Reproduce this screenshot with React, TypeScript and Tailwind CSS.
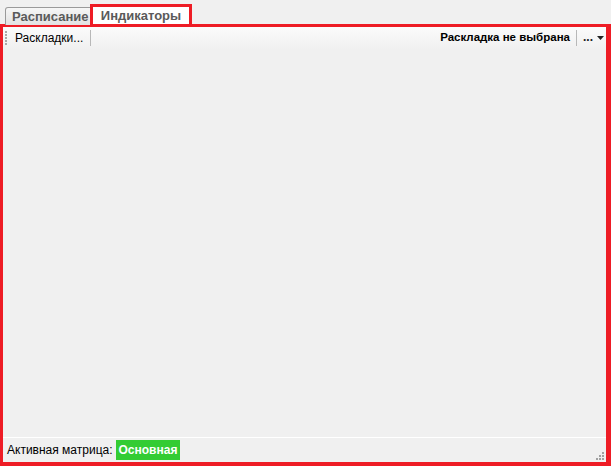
import React from "react";

export default function App() {
  return (
    <div className="w-[611px] h-[466px] bg-[#f0f0f0] flex flex-col font-['Liberation_Sans',Arial,sans-serif] overflow-hidden">
      {/* tabs */}
      <div className="h-[24px] flex items-end pl-[5px] relative z-10">
        <div className="h-[18px] w-[87px] border border-[#9a9a9a] border-b-0 rounded-tl-[3px] bg-gradient-to-b from-[#f6f6f6] to-[#e2e2e2] flex items-center pl-[6px] text-[13px] font-bold text-[#5a5a5a] leading-none mb-[-1px]">
          Расписание
        </div>
        <div className="h-[23px] w-[102px] -ml-[2px] border-[3px] border-[#ee1c25] bg-white flex items-center justify-center text-[13px] font-bold text-[#5a5a5a] leading-none mb-[-3px]">
          Индикаторы
        </div>
      </div>
      {/* panel */}
      <div className="flex-1 flex flex-col border-t-[3px] border-l-[3px] border-r-[5px] border-b-[4px] border-[#ee1c25] bg-[#f0f0f0]">
        {/* toolbar */}
        <div className="h-[22px] flex items-center bg-gradient-to-b from-[#fbfbfb] to-[#f0f0f0] text-[12px] text-black">
          <div className="ml-[2px] w-[2px] h-[16px] flex flex-col justify-between py-[1px]">
            {[0, 1, 2, 3, 4].map((i) => (
              <div key={i} className="w-[2px] h-[2px] bg-[#a8a8a8]" />
            ))}
          </div>
          <span className="ml-[8px]">Раскладки...</span>
          <div className="ml-[7px] w-px h-[16px] bg-[#b8b8b8]" />
          <div className="flex-1" />
          <span className="font-bold text-[11.5px]">Раскладка не выбрана</span>
          <div className="ml-[6px] w-px h-[16px] bg-[#b8b8b8]" />
          <span className="ml-[6px] font-bold text-[#202020] leading-none -mt-[2px]">...</span>
          <svg width="7" height="4" viewBox="0 0 7 4" className="ml-[4px] mr-[2px]">
            <polygon points="0,0 7,0 3.5,4" fill="#222" />
          </svg>
        </div>
        <div className="flex-1" />
        {/* status bar */}
        <div className="h-[25px] border-t border-white flex items-center text-[12px] text-black relative">
          <span className="ml-[4px]">Активная матрица:</span>
          <span className="ml-[3px] h-[20px] px-[3px] bg-[#33cc33] text-white font-bold flex items-center text-[12px]">Основная</span>
          <div className="flex-1" />
          <svg width="10" height="10" viewBox="0 0 10 10" className="mr-[1px] self-end mb-[1px]">
            <rect x="7" y="1" width="2" height="2" fill="#a0a0a0" />
            <rect x="4" y="4" width="2" height="2" fill="#a0a0a0" />
            <rect x="7" y="4" width="2" height="2" fill="#a0a0a0" />
            <rect x="1" y="7" width="2" height="2" fill="#a0a0a0" />
            <rect x="4" y="7" width="2" height="2" fill="#a0a0a0" />
            <rect x="7" y="7" width="2" height="2" fill="#a0a0a0" />
          </svg>
        </div>
      </div>
    </div>
  );
}
